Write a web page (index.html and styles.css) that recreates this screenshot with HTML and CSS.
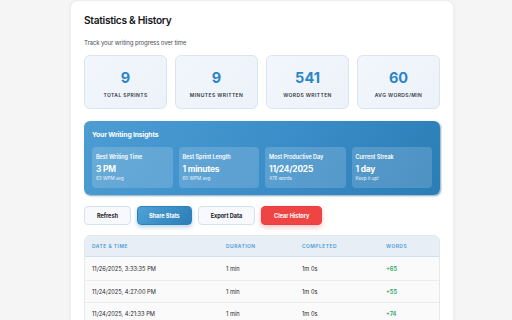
FILE: index.html
```html
<!DOCTYPE html>
<html>
<head>
<meta charset="utf-8">
<link rel="stylesheet" href="styles.css">
</head>
<body>
<div class="panel">
  <h1 class="title">Statistics &amp; History</h1>
  <p class="subtitle">Track your writing progress over time</p>
  <div class="stats">
    <div class="stat"><div class="num">9</div><div class="lbl">Total Sprints</div></div>
    <div class="stat"><div class="num">9</div><div class="lbl">Minutes Written</div></div>
    <div class="stat"><div class="num">541</div><div class="lbl">Words Written</div></div>
    <div class="stat"><div class="num">60</div><div class="lbl">Avg Words/Min</div></div>
  </div>
  <div class="insights">
    <div class="ins-title">Your Writing Insights</div>
    <div class="ins-grid">
      <div class="ins"><div class="ins-lbl">Best Writing Time</div><div class="ins-val">3 PM</div><div class="ins-sub">63 WPM avg</div></div>
      <div class="ins"><div class="ins-lbl">Best Sprint Length</div><div class="ins-val">1 minutes</div><div class="ins-sub">60 WPM avg</div></div>
      <div class="ins"><div class="ins-lbl">Most Productive Day</div><div class="ins-val">11/24/2025</div><div class="ins-sub">476 words</div></div>
      <div class="ins"><div class="ins-lbl">Current Streak</div><div class="ins-val">1 day</div><div class="ins-sub">Keep it up!</div></div>
    </div>
  </div>
  <div class="actions">
    <button class="btn">Refresh</button>
    <button class="btn primary">Share Stats</button>
    <button class="btn">Export Data</button>
    <button class="btn danger">Clear History</button>
  </div>
  <div class="table">
    <div class="row head"><span>Date &amp; Time</span><span>Duration</span><span>Completed</span><span>Words</span></div>
    <div class="row"><span>11/26/2025, 3:33:35 PM</span><span>1 min</span><span>1m 0s</span><span class="pos">+65</span></div>
    <div class="row"><span>11/24/2025, 4:27:00 PM</span><span>1 min</span><span>1m 0s</span><span class="pos">+55</span></div>
    <div class="row"><span>11/24/2025, 4:21:33 PM</span><span>1 min</span><span>1m 0s</span><span class="pos">+74</span></div>
  </div>
</div>
</body>
</html>
```
FILE: styles.css
```css
* { box-sizing: border-box; }
html, body { margin: 0; padding: 0; }
body {
  background: #f5f5f6;
  font-family: Inter, "Liberation Sans", sans-serif;
  color: #1f2328;
  height: 320px;
  overflow: hidden;
}
.panel {
  width: 384px;
  margin: 0 0 0 70px;
  background: #fff;
  border-radius: 8px;
  padding: 13px 13px 20px;
  box-shadow: 0 1px 4px rgba(0,0,0,0.06);
  border: 1px solid #eeeeef;
  height: 340px;
}
.title {
  margin: 0;
  font-size: 10.2px;
  font-weight: 600;
  line-height: 13px;
  color: #16181b;
  letter-spacing: -0.3px;
}
.subtitle {
  margin: 11px 0 0;
  font-size: 6.1px;
  line-height: 9px;
  color: #4a4f55;
  letter-spacing: -0.15px;
}
.stats {
  margin-top: 8px;
  display: grid;
  grid-template-columns: repeat(4, 1fr);
  gap: 8px;
}
.stat {
  height: 54px;
  border: 1px solid #d8e5f2;
  border-radius: 6px;
  background: linear-gradient(135deg, #f3f7fc, #ecf2f9);
  display: flex;
  flex-direction: column;
  align-items: center;
  padding-top: 14px;
}
.num {
  font-size: 14.5px;
  font-weight: 700;
  line-height: 16px;
  color: #2a86c6;
}
.lbl {
  margin-top: 6px;
  font-size: 5px;
  font-weight: 600;
  letter-spacing: 0.4px;
  text-transform: uppercase;
  color: #33373c;
}
.insights {
  margin-top: 12px;
  height: 74px;
  border-radius: 6px;
  background: linear-gradient(120deg, #4d9dd3 0%, #3a8dc8 55%, #2b7db5 100%);
  box-shadow: 1px 1px 2px rgba(20,80,130,0.5);
  padding: 8px 8px 7px;
  color: #fff;
}
.ins-title {
  font-size: 6.8px;
  font-weight: 700;
  line-height: 11px;
  letter-spacing: -0.15px;
}
.ins-grid {
  margin-top: 7px;
  display: grid;
  grid-template-columns: repeat(4, 1fr);
  gap: 6px;
}
.ins {
  height: 41px;
  border-radius: 4px;
  background: rgba(255,255,255,0.16);
  padding: 6px 4px 0;
}
.ins-lbl {
  font-size: 5.5px;
  font-weight: 600;
  line-height: 8px;
  letter-spacing: -0.05px;
}
.ins-val {
  margin-top: 2px;
  font-size: 8.4px;
  font-weight: 700;
  line-height: 12px;
  letter-spacing: -0.2px;
}
.ins-sub {
  font-size: 4.6px;
  line-height: 7px;
  opacity: 0.9;
}
.actions {
  margin-top: 11px;
  display: flex;
  gap: 6px;
}
.btn {
  height: 19px;
  padding: 0 12px;
  border-radius: 4px;
  border: 1px solid #d3e2f0;
  background: #f7f9fc;
  font-family: Inter, "Liberation Sans", sans-serif;
  font-size: 5.6px;
  font-weight: 700;
  color: #1f2328;
  letter-spacing: -0.05px;
}
.btn.primary {
  padding: 0 11px;
  border-color: #2f82bb;
  background: linear-gradient(135deg, #4fa1d7, #2b7db6);
  color: #fff;
  box-shadow: 0 2px 4px rgba(43,125,182,0.35);
}
.btn.danger {
  border-color: #e84040;
  background: #ef4444;
  color: #fff;
  box-shadow: 0 2px 5px rgba(239,68,68,0.35);
}
.table {
  margin-top: 10px;
  border: 1px solid #e3e8ee;
  border-radius: 6px;
  overflow: hidden;
  background: #fafafa;
}
.row {
  display: grid;
  grid-template-columns: 134px 76px 84px 1fr;
  padding-left: 7px;
  align-items: center;
  height: 22.5px;
  border-top: 1px solid #ececec;
  font-size: 5.7px;
  color: #25282c;
}
.row.head {
  height: 21px;
  border-top: none;
  border-bottom: 1px solid #cfe0f0;
  background: #e7eef6;
  font-size: 4.9px;
  font-weight: 600;
  letter-spacing: 0.5px;
  text-transform: uppercase;
  color: #4b9bd5;
}
.row.head + .row { border-top: none; }
.pos { color: #22a35a; font-weight: 600; }
```
